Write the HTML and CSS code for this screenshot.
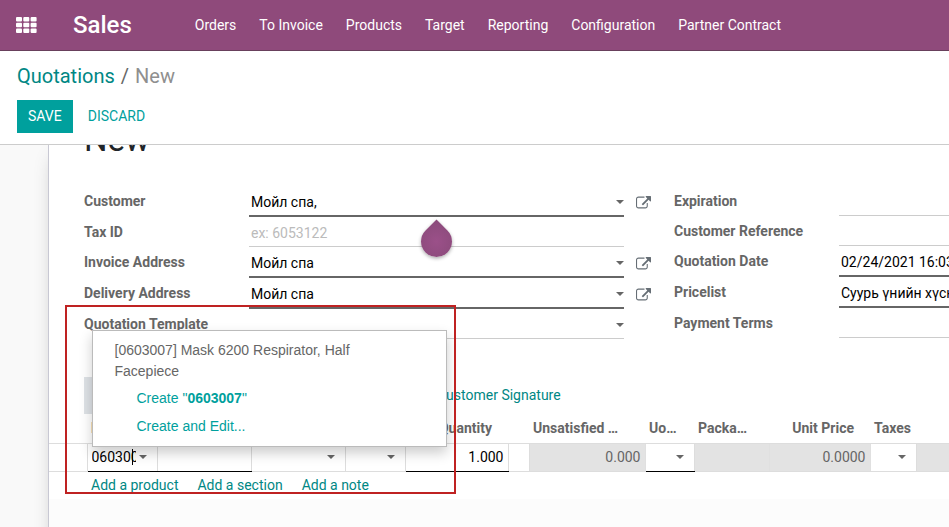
FILE: index.html
```html
<!DOCTYPE html>
<html lang="en">
<head>
<meta charset="utf-8">
<title>Quotations / New</title>
<link rel="stylesheet" href="styles.css">
</head>
<body>
<svg class="defs" aria-hidden="true">
  <symbol id="external" viewBox="0 0 1792 1536"><path d="M1408 864v320q0 119-84.500 203.500t-203.500 84.500h-832q-119 0-203.500-84.500t-84.500-203.500v-832q0-119 84.500-203.500t203.500-84.500h704q14 0 23 9t9 23v64q0 14-9 23t-23 9h-704q-66 0-113 47t-47 113v832q0 66 47 113t113 47h832q66 0 113-47t47-113v-320q0-14 9-23t23-9h64q14 0 23 9t9 23zm384-800v512q0 26-19 45t-45 19-45-19l-176-176-652 652q-10 10-23 10t-23-10l-114-114q-10-10-10-23t10-23l652-652-176-176q-19-19-19-45t19-45 45-19h512q26 0 45 19t19 45z"/></symbol>
</svg>

<header class="navbar">
  <button class="apps" type="button" aria-label="Applications">
    <svg viewBox="0 0 21 16" width="21" height="16" fill="currentColor"><rect width="6" height="4.500" rx="1"/><rect x="7.300" width="6" height="4.500" rx="1"/><rect x="14.600" width="6" height="4.500" rx="1"/><rect y="5.700" width="6" height="4.500" rx="1"/><rect x="7.300" y="5.700" width="6" height="4.500" rx="1"/><rect x="14.600" y="5.700" width="6" height="4.500" rx="1"/><rect y="11.400" width="6" height="4.500" rx="1"/><rect x="7.300" y="11.400" width="6" height="4.500" rx="1"/><rect x="14.600" y="11.400" width="6" height="4.500" rx="1"/></svg>
  </button>
  <a class="brand" href="#">Sales</a>
  <nav class="menu">
    <a href="#">Orders</a>
    <a href="#">To Invoice</a>
    <a href="#">Products</a>
    <a href="#">Target</a>
    <a href="#">Reporting</a>
    <a href="#">Configuration</a>
    <a href="#">Partner Contract</a>
  </nav>
</header>

<section class="control">
  <div class="crumbs"><a href="#">Quotations</a><span class="slash">/</span><span class="current">New</span></div>
  <div class="actions">
    <button class="btn primary" type="button">SAVE</button>
    <button class="btn" type="button">DISCARD</button>
  </div>
</section>

<main class="content">
  <div class="sheet">
    <h1 class="title">New</h1>

    <form class="groups">
      <div class="group">
        <div class="row">
          <label for="customer">Customer</label>
          <div class="field required"><input id="customer" value="Мойл спа,"><span class="caret"></span><span class="pin"></span></div>
          <button class="open" type="button" aria-label="Open customer"><svg><use href="#external"/></svg></button>
        </div>
        <div class="row">
          <label for="tax">Tax ID</label>
          <div class="field"><input id="tax" placeholder="ex: 6053122"></div>
        </div>
        <div class="row">
          <label for="invoice">Invoice Address</label>
          <div class="field required"><input id="invoice" value="Мойл спа"><span class="caret"></span></div>
          <button class="open" type="button" aria-label="Open invoice address"><svg><use href="#external"/></svg></button>
        </div>
        <div class="row">
          <label for="delivery">Delivery Address</label>
          <div class="field required"><input id="delivery" value="Мойл спа"><span class="caret"></span></div>
          <button class="open" type="button" aria-label="Open delivery address"><svg><use href="#external"/></svg></button>
        </div>
        <div class="row">
          <label for="template">Quotation Template</label>
          <div class="field"><input id="template"><span class="caret"></span></div>
        </div>
      </div>
      <div class="group">
        <div class="row">
          <label for="expiration">Expiration</label>
          <div class="field"><input id="expiration"></div>
        </div>
        <div class="row">
          <label for="reference">Customer Reference</label>
          <div class="field"><input id="reference"></div>
        </div>
        <div class="row">
          <label for="date">Quotation Date</label>
          <div class="field required"><input id="date" value="02/24/2021 16:03"></div>
        </div>
        <div class="row">
          <label for="pricelist">Pricelist</label>
          <div class="field required"><input id="pricelist" value="Суурь үнийн хүснэгт"></div>
        </div>
        <div class="row">
          <label for="terms">Payment Terms</label>
          <div class="field"><input id="terms"></div>
        </div>
      </div>
    </form>

    <nav class="tabs">
      <a class="active" href="#" aria-label="Order Lines"></a>
      <a href="#">Customer Signature</a>
    </nav>

    <table class="lines">
      <colgroup>
        <col class="c-handle"><col class="c-product"><col class="c-desc"><col class="c-desc"><col class="c-tags"><col class="c-qty"><col class="c-gap"><col class="c-unsat"><col class="c-uom"><col class="c-pack"><col class="c-price"><col class="c-taxes"><col>
      </colgroup>
      <thead>
        <tr><th></th><th>Product</th><th></th><th></th><th></th><th class="num">Quantity</th><th></th><th>Unsatisfied …</th><th>Uo…</th><th>Packa…</th><th class="num">Unit Price</th><th>Taxes</th><th></th></tr>
      </thead>
      <tbody>
        <tr>
          <td></td>
          <td class="product must">
            <div class="cell"><input class="search" aria-label="Product" value="0603007"><span class="caret"></span><span class="cursor"></span></div>
            <div class="dropdown">
              <a class="option" href="#">[0603007] Mask 6200 Respirator, Half Facepiece</a>
              <a class="option create" href="#">Create "<b>0603007</b>"</a>
              <a class="option create" href="#">Create and Edit...</a>
            </div>
          </td>
          <td class="must"><div class="cell"><input aria-label="Description"></div></td>
          <td><div class="cell"><input aria-label="Route"><span class="caret"></span></div></td>
          <td><div class="cell"><input aria-label="Tags"><span class="caret"></span></div></td>
          <td class="must"><div class="cell"><input class="num" aria-label="Quantity" value="1.000"></div></td>
          <td></td>
          <td class="readonly num">0.000</td>
          <td class="must"><div class="cell"><input aria-label="Unit of measure"><span class="caret"></span></div></td>
          <td class="readonly"></td>
          <td class="readonly num">0.0000</td>
          <td><div class="cell"><input aria-label="Taxes"><span class="caret"></span></div></td>
          <td class="readonly"></td>
        </tr>
      </tbody>
    </table>
    <div class="adders">
      <a href="#">Add a product</a>
      <a href="#">Add a section</a>
      <a href="#">Add a note</a>
    </div>
  </div>
  <div class="highlight"></div>
</main>
</body>
</html>
```
FILE: styles.css
```css
* { box-sizing: border-box; }

body {
  margin: 0;
  height: 100vh;
  display: flex;
  flex-direction: column;
  overflow: hidden;
  background: #fff;
  color: #666;
  font: 14px/21px Roboto, sans-serif;
}

a { color: #008784; text-decoration: none; }
button, input { font: inherit; }
button { border: 0; padding: 0; background: none; cursor: pointer; }
.defs { display: none; }

.navbar {
  flex: none;
  display: flex;
  align-items: center;
  height: 51px;
  padding: 0 16px;
  background: #8f4a7b;
  border-bottom: 1px solid #68405c;
}
.navbar a, .apps { color: #fff; }
.apps { display: flex; }
.brand { margin-left: 36px; font-size: 24px; font-weight: 500; }
.menu { display: flex; gap: 23px; margin-left: 63px; }

.control {
  flex: none;
  padding: 12px 17px 11px;
  border-bottom: 1px solid #ccc;
}
.crumbs { display: flex; gap: 6px; font-size: 20px; line-height: 26px; }
.current { color: #8f8f8f; }
.actions { display: flex; gap: 4px; margin-top: 11px; }
.btn { height: 33px; padding: 0 11px; color: #00a09d; }
.btn.primary { background: #00a09d; color: #fff; }

.content {
  position: relative;
  flex: 1;
  min-height: 0;
  overflow: hidden;
  background: #f9f9f9;
}
.sheet {
  display: flow-root;
  margin-left: 48px;
  min-width: 1250px;
  min-height: 100vh;
  border-left: 1px solid #c8c8d3;
  background: linear-gradient(#fff, #fff) top / 100% 354px no-repeat #fcfcfc;
  box-shadow: 0 5px 20px -10px #999;
}
.title {
  margin: -25px 35px 0;
  padding-bottom: 26px;
  color: #212529;
  font-size: 33px;
  font-weight: 400;
  line-height: 40px;
}

.groups { display: grid; grid-template-columns: 590px 590px; margin-left: 35px; }
.group { padding-right: 23px; }
.row { display: grid; grid-template-columns: 165px 1fr 27px; align-items: start; padding-top: 5px; }
.row label { font-weight: 700; line-height: 21px; }
.field {
  position: relative;
  display: flex;
  align-items: center;
  padding-bottom: 2px;
  border-bottom: 1px solid #ccc;
}
.field.required { border-bottom: 2px solid #666; }
.field input {
  flex: 1;
  min-width: 0;
  height: 22px;
  padding: 0 2px;
  border: 0;
  outline: 0;
  background: none;
  color: #000;
}
input::placeholder { color: #bbb; }
.caret {
  flex: none;
  width: 8px;
  border: 4px solid transparent;
  border-top-color: #666;
  border-bottom: 0;
}
.open { display: flex; justify-content: flex-end; padding-top: 5px; color: #666e75; }
.open svg { width: 15px; height: 13px; fill: currentColor; }

.pin {
  position: absolute;
  z-index: 1;
  top: calc(100% + 11px);
  left: 172px;
  width: 31px;
  height: 31px;
  border-radius: 0 50% 50% 50%;
  background: radial-gradient(#9b5089, #8a4a7a);
  box-shadow: 1px 1px 4px #0005;
  transform: rotate(45deg);
}
.pin { border-top-left-radius: 0; border-top-right-radius: 50%; }

.tabs { display: flex; margin: 38px 0 0 35px; }
.tabs a { height: 37px; padding: 8px 16px; }
.tabs .active { width: 107px; margin-right: 230px; background: #dee2e6; }

.lines { width: 100%; border-collapse: collapse; table-layout: fixed; }
.c-handle { width: 38px; }
.c-product { width: 70px; }
.c-desc { width: 94px; }
.c-tags { width: 60px; }
.c-qty { width: 103px; }
.c-gap { width: 21px; }
.c-unsat { width: 116px; }
.c-uom { width: 49px; }
.c-pack { width: 75px; }
.c-price { width: 101px; }
.c-taxes { width: 46px; }
.lines th {
  height: 29px;
  padding: 0 4px;
  border-bottom: 1px solid #ddd;
  text-align: left;
  white-space: nowrap;
}
.lines th.num { padding-right: 16px; }
.lines td { position: relative; height: 28px; padding: 0; border: 1px solid #ddd; border-top: 0; }
.lines td:first-child { border-left: 0; }
.lines td.must { border-bottom-color: #000; }
.lines td.readonly { padding: 0 4px; background: #e3e3e3; border-color: #ddd #e0e0e0; }
.num { text-align: right; }
.lines th.num { text-align: right; }
.cell { position: relative; display: flex; align-items: center; padding-right: 10px; }
.cell input {
  flex: 1;
  width: 0;
  min-width: 0;
  height: 26px;
  padding: 0 4px;
  border: 0;
  outline: 0;
  background: none;
  color: #000;
}
.cell .num { margin-right: -10px; }
.cell .search { padding-right: 0; margin-right: 3px; }
.cursor { position: absolute; left: 44px; top: 5px; width: 1px; height: 16px; background: #000; }

.dropdown {
  position: absolute;
  z-index: 2;
  bottom: calc(100% - 3px);
  left: 4px;
  width: 355px;
  padding: 9px 0 5px;
  border: 1px solid #bbb;
  background: #fff;
  box-shadow: 0 6px 12px #0003;
  font-family: "Liberation Sans", sans-serif;
}
.option { display: block; padding: 0 60px 3px 22px; color: #666; }
.option.create { padding: 3px 22px 4px 44px; color: #00a09d; }

.adders { display: flex; gap: 19px; padding: 3px 42px; }

.highlight {
  position: absolute;
  z-index: 3;
  top: 160px;
  left: 65px;
  width: 391px;
  height: 189px;
  border: 2px solid #bf2222;
  pointer-events: none;
}
```
